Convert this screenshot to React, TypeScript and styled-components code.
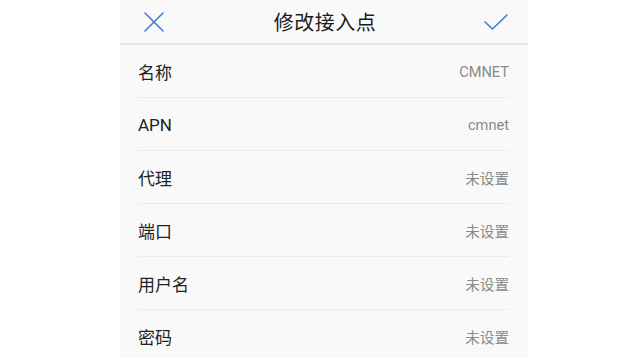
import React from 'react';
import styled, { createGlobalStyle } from 'styled-components';

interface Field {
  label: string;
  value: string;
}

const fields: Field[] = [
  { label: '名称', value: 'CMNET' },
  { label: 'APN', value: 'cmnet' },
  { label: '代理', value: '未设置' },
  { label: '端口', value: '未设置' },
  { label: '用户名', value: '未设置' },
  { label: '密码', value: '未设置' },
];

const GlobalStyle = createGlobalStyle`
  html, body {
    margin: 0;
    padding: 0;
    background: #ffffff;
    font-family: Roboto, 'Noto Sans CJK SC', sans-serif;
  }
`;

const StyledPage = styled.div`
  display: flex;
  justify-content: center;
  height: 358px;
  overflow: hidden;
`;

const StyledScreen = styled.div`
  background-color: #f9f9f9;
  display: flex;
  flex-direction: column;
  width: 408px;
  margin-left: 8px;
`;

const StyledHeader = styled.div`
  align-items: center;
  border-bottom: 2px solid #e3e3e3;
  display: flex;
  flex-shrink: 0;
  height: 43px;
  justify-content: space-between;
  padding: 0 20px 0 22px;
`;

const StyledTitle = styled.h1`
  color: #1c1c1c;
  font-family: 'Noto Sans CJK SC', sans-serif;
  font-size: 20px;
  font-weight: 400;
  letter-spacing: 0.5px;
  margin: 0;
`;

const StyledIconButton = styled.span`
  display: flex;
  align-items: center;
  justify-content: center;
  width: 24px;
  height: 24px;
`;

const StyledList = styled.div`
  display: flex;
  flex-direction: column;
  flex-shrink: 0;
  padding: 0 19px 0 18px;
`;

const StyledRow = styled.div`
  align-items: center;
  border-bottom: 1px solid #ebebeb;
  box-sizing: border-box;
  display: flex;
  flex-shrink: 0;
  height: 53px;
  justify-content: space-between;
  padding-top: 1px;
`;

const StyledLabel = styled.span`
  color: #222;
  font-family: Roboto, 'Noto Sans CJK SC', sans-serif;
  font-size: 17px;
`;

const StyledValue = styled.span`
  color: #8a8a8a;
  font-family: Roboto, 'Noto Sans CJK SC', sans-serif;
  font-size: 14.6px;
`;

const CloseIcon = () => (
  <svg width="20" height="20" viewBox="0 0 20 20" fill="none">
    <path d="M1 1 L19 19 M19 1 L1 19" stroke="#3b7fd1" strokeWidth="1.6" strokeLinecap="round" />
  </svg>
);

const CheckIcon = () => (
  <svg width="24" height="16" viewBox="0 0 24 16" fill="none">
    <path d="M1 8 L8.5 15 L23 1" stroke="#3b7fd1" strokeWidth="1.6" strokeLinecap="round" strokeLinejoin="round" />
  </svg>
);

export default function App() {
  return (
    <>
      <GlobalStyle />
      <StyledPage>
        <StyledScreen>
          <StyledHeader>
            <StyledIconButton>
              <CloseIcon />
            </StyledIconButton>
            <StyledTitle>修改接入点</StyledTitle>
            <StyledIconButton>
              <CheckIcon />
            </StyledIconButton>
          </StyledHeader>
          <StyledList>
            {fields.map((f) => (
              <StyledRow key={f.label}>
                <StyledLabel>{f.label}</StyledLabel>
                <StyledValue>{f.value}</StyledValue>
              </StyledRow>
            ))}
          </StyledList>
        </StyledScreen>
      </StyledPage>
    </>
  );
}
